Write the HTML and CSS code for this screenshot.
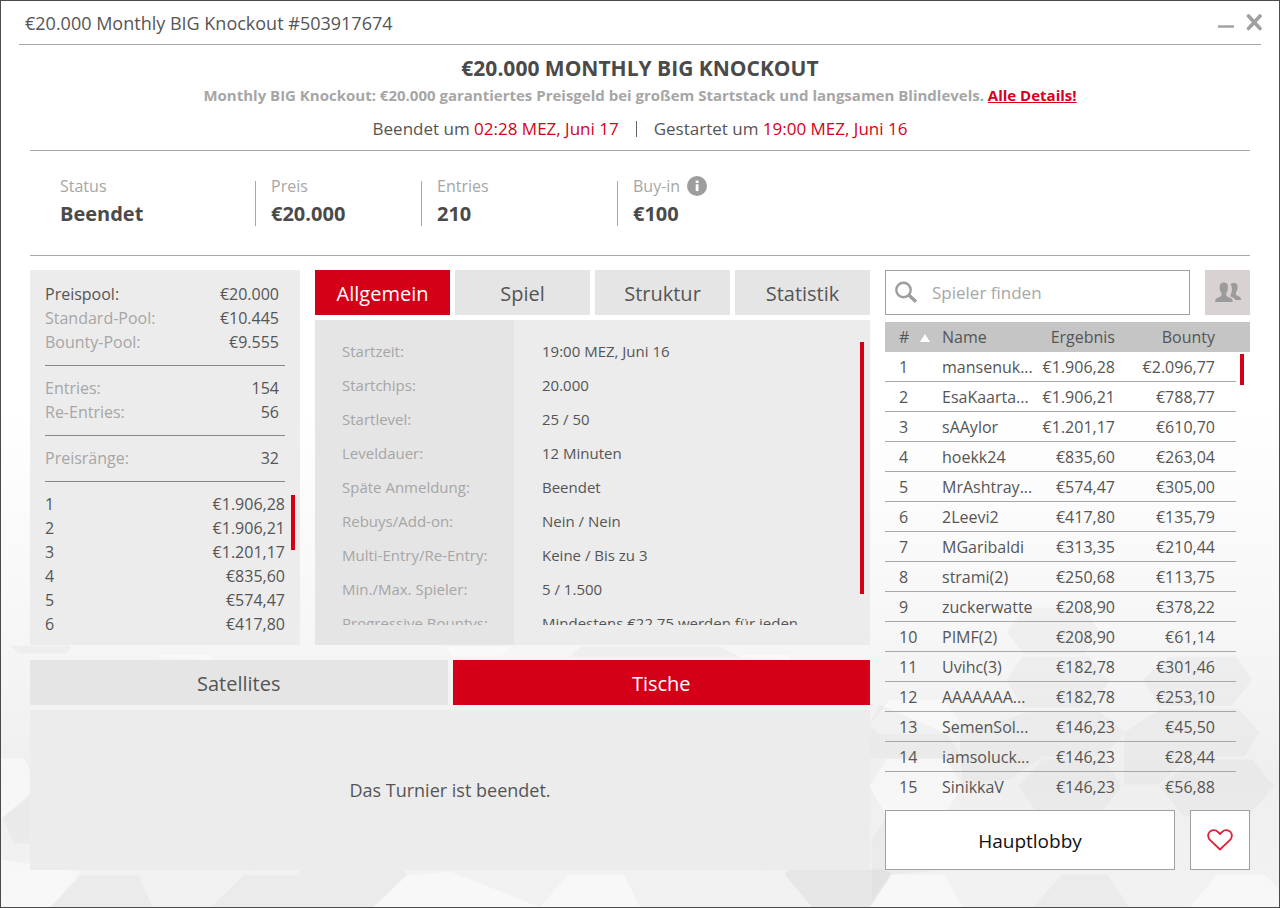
FILE: index.html
```html
<!DOCTYPE html>
<html lang="de">
<head>
    <meta charset="UTF-8">
    <title>€20.000 Monthly BIG Knockout #503917674</title>
    <link rel="stylesheet" href="styles.css">
</head>
<body>
    <div class="window">
        <svg class="backdrop" viewBox="0 0 1280 508" preserveAspectRatio="xMidYMax slice" aria-hidden="true">
            <g fill="#fff" fill-opacity="0.45">
                <polygon points="0,359 23,359 40,388 0,420"/>
                <polygon points="870,387 887,359 947,359 963,387 943,417 887,417"/>
                <polygon points="870,325 890,300 945,300 958,320 945,335 880,335"/>
                <polygon points="892,475 945,475 963,508 870,508"/>
                <polygon points="1218,475 1265,475 1280,490 1280,508 1190,508"/>
                <polygon points="373,508 406,476 450,472 540,508"/>
                <polygon points="540,508 568,475 624,475 640,508"/>
                <polygon points="445,247 512,247 500,257 452,257"/>
                <polygon points="155,257 162,255 212,255 212,260"/>
                <polygon points="738,257 745,255 790,255 790,260"/>
                <polygon points="0,460 80,472 50,508 0,508"/>
            </g>
            <g fill="#c8c8c8" fill-opacity="0.14">
                <polygon points="2,418 30,393 30,444 13,444"/>
                <polygon points="50,508 80,476 138,476 152,508"/>
                <polygon points="210,508 243,476 299,476 316,508"/>
                <polygon points="299,470 403,470 406,476 373,508 316,508 299,476"/>
                <polygon points="1043,360 1105,360 1122,387 1103,412 1037,412 1019,387"/>
                <polygon points="1193,360 1253,360 1275,387 1248,417 1185,417 1160,387"/>
                <polygon points="1007,280 1023,257 1090,257 1110,282 1090,308 1023,308"/>
                <polygon points="1170,257 1237,257 1253,280 1233,306 1160,306 1143,280"/>
                <polygon points="1007,232 1025,208 1085,208 1100,232 1085,254 1025,254"/>
                <polygon points="870,325 880,305 948,335 963,359 870,359"/>
                <polygon points="960,335 1030,312 1100,312 1125,333 1105,357 1043,357 1010,380 963,385"/>
                <polygon points="1125,333 1160,310 1240,310 1260,333 1245,357 1190,357 1160,385 1125,385"/>
                <polygon points="1063,475 1108,475 1130,508 1033,508"/>
                <polygon points="872,440 885,421 947,421 950,470 890,475 872,500"/>
                <polygon points="580,247 650,247 720,247 740,257 570,257"/>
                <polygon points="10,246 70,246 66,254 18,254"/>
            </g>
            <polygon points="785,475 790,470 885,470 892,475 870,508 812,508" fill="#c8c8c8" fill-opacity="0.26"/>
        </svg>

        <header class="titlebar">
            <span>€20.000 Monthly BIG Knockout #503917674</span>
            <div class="window-buttons">
                <button type="button" class="icon-button" aria-label="Minimieren">
                    <svg width="17" height="18" viewBox="0 0 17 18"><path d="M0 12.500h16" stroke="#a0a0a0" stroke-width="2.4"/></svg>
                </button>
                <button type="button" class="icon-button" aria-label="Schließen">
                    <svg width="18" height="18" viewBox="0 0 18 18"><path d="M2.500 2l11.500 12.500M14 2L2.500 14.500" stroke="#a0a0a0" stroke-width="3.600" stroke-linecap="round"/></svg>
                </button>
            </div>
        </header>

        <section class="intro">
            <h1>€20.000 MONTHLY BIG KNOCKOUT</h1>
            <p class="teaser">Monthly BIG Knockout: €20.000 garantiertes Preisgeld bei großem Startstack und langsamen Blindlevels. <a href="#details">Alle Details!</a></p>
            <p class="times">
                <span>Beendet um <em>02:28 MEZ, Juni 17</em></span>
                <span class="bar"></span>
                <span>Gestartet um <em>19:00 MEZ, Juni 16</em></span>
            </p>
        </section>

        <section class="stats">
            <div class="stat stat-status"><span>Status</span><strong>Beendet</strong></div>
            <div class="stat stat-prize"><span>Preis</span><strong>€20.000</strong></div>
            <div class="stat stat-entries"><span>Entries</span><strong>210</strong></div>
            <div class="stat">
                <span>Buy-in
                    <svg class="info" width="20" height="20" viewBox="0 0 20 20"><circle cx="10" cy="10" r="10" fill="#9d9d9d"/><path d="M8.700 8.200h2.800V15H8.700zM8.700 4.500h2.800V7H8.700z" fill="#fff"/></svg>
                </span>
                <strong>€100</strong>
            </div>
        </section>

        <main class="main" id="details">
            <div class="left">
                <section class="pool">
                    <dl class="pairs">
                        <div class="total"><dt>Preispool:</dt><dd>€20.000</dd></div>
                        <div><dt>Standard-Pool:</dt><dd>€10.445</dd></div>
                        <div><dt>Bounty-Pool:</dt><dd>€9.555</dd></div>
                    </dl>
                    <hr>
                    <dl class="pairs">
                        <div><dt>Entries:</dt><dd>154</dd></div>
                        <div><dt>Re-Entries:</dt><dd>56</dd></div>
                    </dl>
                    <hr>
                    <dl class="pairs">
                        <div><dt>Preisränge:</dt><dd>32</dd></div>
                    </dl>
                    <hr>
                    <div class="scroll">
                        <dl class="pairs payouts">
                            <div><dt>1</dt><dd>€1.906,28</dd></div>
                            <div><dt>2</dt><dd>€1.906,21</dd></div>
                            <div><dt>3</dt><dd>€1.201,17</dd></div>
                            <div><dt>4</dt><dd>€835,60</dd></div>
                            <div><dt>5</dt><dd>€574,47</dd></div>
                            <div><dt>6</dt><dd>€417,80</dd></div>
                        </dl>
                        <span class="thumb thumb-payouts"></span>
                    </div>
                </section>

                <section class="info-area">
                    <nav class="tabs">
                        <button type="button" class="tab active">Allgemein</button>
                        <button type="button" class="tab">Spiel</button>
                        <button type="button" class="tab">Struktur</button>
                        <button type="button" class="tab">Statistik</button>
                    </nav>
                    <div class="details">
                        <dl>
                            <dt>Startzeit:</dt><dd>19:00 MEZ, Juni 16</dd>
                            <dt>Startchips:</dt><dd>20.000</dd>
                            <dt>Startlevel:</dt><dd>25 / 50</dd>
                            <dt>Leveldauer:</dt><dd>12 Minuten</dd>
                            <dt>Späte Anmeldung:</dt><dd>Beendet</dd>
                            <dt>Rebuys/Add-on:</dt><dd>Nein / Nein</dd>
                            <dt>Multi-Entry/Re-Entry:</dt><dd>Keine / Bis zu 3</dd>
                            <dt>Min./Max. Spieler:</dt><dd>5 / 1.500</dd>
                            <dt>Progressive Bountys:</dt><dd>Mindestens €22,75 werden für jeden</dd>
                        </dl>
                        <span class="thumb thumb-details"></span>
                    </div>
                </section>

                <section class="lower">
                    <nav class="tabs">
                        <button type="button" class="tab">Satellites</button>
                        <button type="button" class="tab active">Tische</button>
                    </nav>
                    <div class="tables-panel">Das Turnier ist beendet.</div>
                </section>
            </div>

            <aside class="players">
                <form class="search">
                    <label class="search-box">
                        <svg width="24" height="24" viewBox="0 0 24 24" fill="none" stroke="#9d9d9d"><circle cx="9.500" cy="9" r="7.200" stroke-width="2.400"/><path d="M15 14.200l7 6.600" stroke-width="3.400"/></svg>
                        <input type="text" placeholder="Spieler finden" aria-label="Spieler finden">
                    </label>
                    <button type="button" class="friends" aria-label="Freunde">
                        <svg width="28" height="22" viewBox="0 0 28 22" fill="#9b9b9b"><path d="M16.500 2.200C17.300 1.300 18.600 1 19.900 1c2.500 0 3.800 1.400 3.700 4.200-.1 2.200-.7 3.900-1.600 5v2.500c1.200 1.300 4 1.700 4.700 3.200.3.600.4 1.400.4 2.100h-5.800c-.7-1.900-2.400-2.700-4.700-3.600v-1.800c1.700-2.600 2.100-7.400-.1-10.400z"/><path d="M5.600 5.200C5.600 2 7 .5 9.800.5s4.300 1.500 4.200 4.700c-.1 2.500-.7 4.600-1.800 6v2.600c1.600 1.400 5.200 1.900 6.100 3.800.3.800.4 1.400.4 2.400H1.200c0-1 .1-1.600.4-2.400.9-1.900 4.300-2.400 5.900-3.800v-2.600c-1.100-1.400-1.800-3.500-1.900-6z"/></svg>
                    </button>
                </form>

                <div class="scroll">
                    <table>
                        <thead>
                            <tr><th class="rank"># <span class="sort"></span></th><th class="name">Name</th><th class="result">Ergebnis</th><th class="bounty">Bounty</th></tr>
                        </thead>
                        <tbody>
                            <tr><td>1</td><td>mansenuk...</td><td>€1.906,28</td><td>€2.096,77</td></tr>
                            <tr><td>2</td><td>EsaKaarta...</td><td>€1.906,21</td><td>€788,77</td></tr>
                            <tr><td>3</td><td>sAAylor</td><td>€1.201,17</td><td>€610,70</td></tr>
                            <tr><td>4</td><td>hoekk24</td><td>€835,60</td><td>€263,04</td></tr>
                            <tr><td>5</td><td>MrAshtray...</td><td>€574,47</td><td>€305,00</td></tr>
                            <tr><td>6</td><td>2Leevi2</td><td>€417,80</td><td>€135,79</td></tr>
                            <tr><td>7</td><td>MGaribaldi</td><td>€313,35</td><td>€210,44</td></tr>
                            <tr><td>8</td><td>strami(2)</td><td>€250,68</td><td>€113,75</td></tr>
                            <tr><td>9</td><td>zuckerwatte</td><td>€208,90</td><td>€378,22</td></tr>
                            <tr><td>10</td><td>PIMF(2)</td><td>€208,90</td><td>€61,14</td></tr>
                            <tr><td>11</td><td>Uvihc(3)</td><td>€182,78</td><td>€301,46</td></tr>
                            <tr><td>12</td><td>AAAAAAA...</td><td>€182,78</td><td>€253,10</td></tr>
                            <tr><td>13</td><td>SemenSol...</td><td>€146,23</td><td>€45,50</td></tr>
                            <tr><td>14</td><td>iamsoluck...</td><td>€146,23</td><td>€28,44</td></tr>
                            <tr><td>15</td><td>SinikkaV</td><td>€146,23</td><td>€56,88</td></tr>
                        </tbody>
                    </table>
                    <span class="thumb thumb-players"></span>
                </div>

                <div class="actions">
                    <button type="button" class="lobby">Hauptlobby</button>
                    <button type="button" class="favorite" aria-label="Favorit">
                        <svg width="26" height="22" viewBox="0 0 26 22"><path d="M13 20.500L3.200 11.200C.7 8.800.5 5.200 2.500 3 4.800.6 8.600.6 10.800 2.800L13 5l2.200-2.200C17.400.6 21.200.6 23.500 3c2 2.200 1.800 5.800-.7 8.200z" fill="none" stroke="#e0203a" stroke-width="1.800" stroke-linejoin="round"/></svg>
                    </button>
                </div>
            </aside>
        </main>
    </div>
</body>
</html>
```
FILE: styles.css
```css
* {
    box-sizing: border-box;
}
body {
    margin: 0;
    font-family: "Open Sans", "Noto Sans", sans-serif;
    font-size: 16px;
    color: #555;
}
button, input {
    font: inherit;
    color: inherit;
}
button {
    padding: 0;
    border: none;
    cursor: pointer;
}
svg {
    display: block;
}
h1, p, dl, dt, dd {
    margin: 0;
}
.window {
    position: relative;
    min-height: 100vh;
    border: 1px solid #4a4a4a;
    background: linear-gradient(#fff 45%, #f7f7f7 68%, #efefef 85%, #f2f2f2);
}
.backdrop {
    position: absolute;
    left: 0;
    bottom: 0;
    width: 100%;
    height: 56%;
}
.titlebar, .intro, .stats, .main {
    position: relative;
}

/* Title bar */
.titlebar {
    display: flex;
    justify-content: space-between;
    align-items: center;
    height: 44px;
    margin: 0 18px;
    padding-left: 6px;
    border-bottom: 1px solid #a8a8a8;
    font-size: 18px;
}
.window-buttons {
    display: flex;
    gap: 11px;
    margin-right: -3px;
}
.icon-button {
    background: none;
}

/* Heading */
.intro {
    margin: 0 29px;
    height: 106px;
    padding-top: 8px;
    border-bottom: 1px solid #a8a8a8;
    text-align: center;
}
h1 {
    font-size: 21px;
    font-weight: 700;
    line-height: 30px;
    color: #4a4a4a;
}
.teaser {
    font-size: 15px;
    font-weight: 700;
    line-height: 24px;
    color: #a6a6a6;
}
.teaser a {
    color: #d8001a;
}
.times {
    display: flex;
    justify-content: center;
    align-items: center;
    gap: 17px;
    margin-top: 9px;
    font-size: 17px;
    line-height: 26px;
}
.times em {
    font-style: normal;
    color: #d8001a;
}
.bar {
    width: 1px;
    height: 16px;
    background: #666;
}

/* Key figures */
.stats {
    display: flex;
    height: 105px;
    margin: 0 29px;
    padding: 30px 0 29px;
    border-bottom: 1px solid #a8a8a8;
}
.stat {
    display: flex;
    flex-direction: column;
    justify-content: space-between;
    padding-left: 15px;
    border-left: 1px solid #a8a8a8;
}
.stat span {
    display: flex;
    align-items: center;
    gap: 7px;
    height: 10px;
    color: #a6a6a6;
}
.stat strong {
    font-size: 20px;
    line-height: 24px;
    color: #4a4a4a;
}
.stat-status {
    width: 225px;
    padding-left: 30px;
    border: none;
}
.stat-prize {
    width: 166px;
}
.stat-entries {
    width: 196px;
}

/* Columns */
.main {
    display: grid;
    grid-template-columns: minmax(0, 1fr) 365px;
    gap: 15px;
    padding: 14px 29px 36px;
}
.left {
    display: grid;
    grid-template-columns: 270px minmax(0, 1fr);
    grid-template-rows: auto 1fr;
    gap: 15px;
}

/* Prize pool */
.pool {
    padding: 12px 15px 9px;
    background: #ececec;
}
.pairs div {
    display: flex;
    justify-content: space-between;
    padding-right: 6px;
    line-height: 24px;
}
.pairs dt {
    color: #a6a6a6;
}
.pairs .total dt, .payouts dt {
    color: #555;
}
.pairs.payouts div {
    padding-right: 0;
}
.pool hr {
    height: 1px;
    margin: 11px 0 10px;
    border: none;
    background: #888;
}
.scroll {
    position: relative;
}
.thumb {
    position: absolute;
    width: 4px;
    background: #d40018;
}
.thumb-payouts {
    top: 3px;
    right: -10px;
    height: 55px;
}
.thumb-details {
    top: 22px;
    right: 6px;
    height: 252px;
}
.thumb-players {
    top: 32px;
    right: 6px;
    height: 31px;
}

/* Tabs */
.tabs {
    display: flex;
    gap: 5px;
    margin-bottom: 5px;
}
.tab {
    flex: 1 1 0;
    height: 45px;
    padding-top: 2px;
    background: #e5e5e5;
    font-size: 20px;
}
.tab.active {
    background: #d40018;
    color: #fff;
}
.details {
    position: relative;
    height: 325px;
    padding: 14px 27px 20px;
    background: linear-gradient(to right, #e5e5e5 199px, #ececec 199px);
}
.details dl {
    display: grid;
    grid-template-columns: 200px minmax(0, 1fr);
    height: 291px;
    overflow: hidden;
    font-size: 15px;
    line-height: 34px;
}
.details dt {
    color: #a6a6a6;
}
.lower {
    grid-column: 1 / -1;
    display: flex;
    flex-direction: column;
}
.tables-panel {
    flex: 1;
    display: flex;
    align-items: center;
    justify-content: center;
    background: #ececec;
    font-size: 18px;
}

/* Player list */
.search {
    display: flex;
    gap: 15px;
    margin-bottom: 7px;
}
.search-box {
    flex: 1;
    display: flex;
    align-items: center;
    gap: 14px;
    height: 45px;
    padding: 0 8px;
    border: 1px solid #a0a0a0;
    background: #fff;
}
.search-box input {
    flex: 1;
    min-width: 0;
    padding: 0;
    border: none;
    outline: none;
    background: none;
    font-size: 17px;
}
.search-box input::placeholder {
    color: #a6a6a6;
    opacity: 1;
}
.friends {
    display: flex;
    align-items: center;
    justify-content: center;
    width: 45px;
    height: 45px;
    background: #d8d2d2;
}
table {
    width: calc(100% - 14px);
    border-collapse: separate;
    border-spacing: 0;
    table-layout: fixed;
}
/* the grey header bar also covers the scrollbar lane */
thead tr {
    background: #c5c5c5;
    box-shadow: 14px 0 0 #c5c5c5;
}
th, td {
    height: 30px;
    padding: 0;
    text-align: left;
    font-weight: 400;
    line-height: 28px;
    white-space: nowrap;
}
td {
    border-bottom: 1px solid #a8a8a8;
}
tbody tr:last-child td {
    border-bottom-color: transparent;
}
th:first-child, td:first-child {
    padding-left: 14px;
}
th:nth-child(n+3), td:nth-child(n+3) {
    text-align: right;
}
th:last-child, td:last-child {
    padding-right: 21px;
}
.rank {
    width: 57px;
}
.result {
    width: 81px;
}
.bounty {
    width: 121px;
}
.sort {
    display: inline-block;
    margin-left: 6px;
    border: 5px solid transparent;
    border-top: none;
    border-bottom: 8px solid #fff;
    vertical-align: 1px;
}
.actions {
    display: flex;
    gap: 15px;
    margin-top: 8px;
}
.lobby, .favorite {
    height: 60px;
    border: 1px solid #a0a0a0;
    background: #fff;
}
.lobby {
    flex: 1;
    padding-top: 2px;
    font-size: 19px;
    color: #111;
}
.favorite {
    display: flex;
    align-items: center;
    justify-content: center;
    width: 60px;
}
```
